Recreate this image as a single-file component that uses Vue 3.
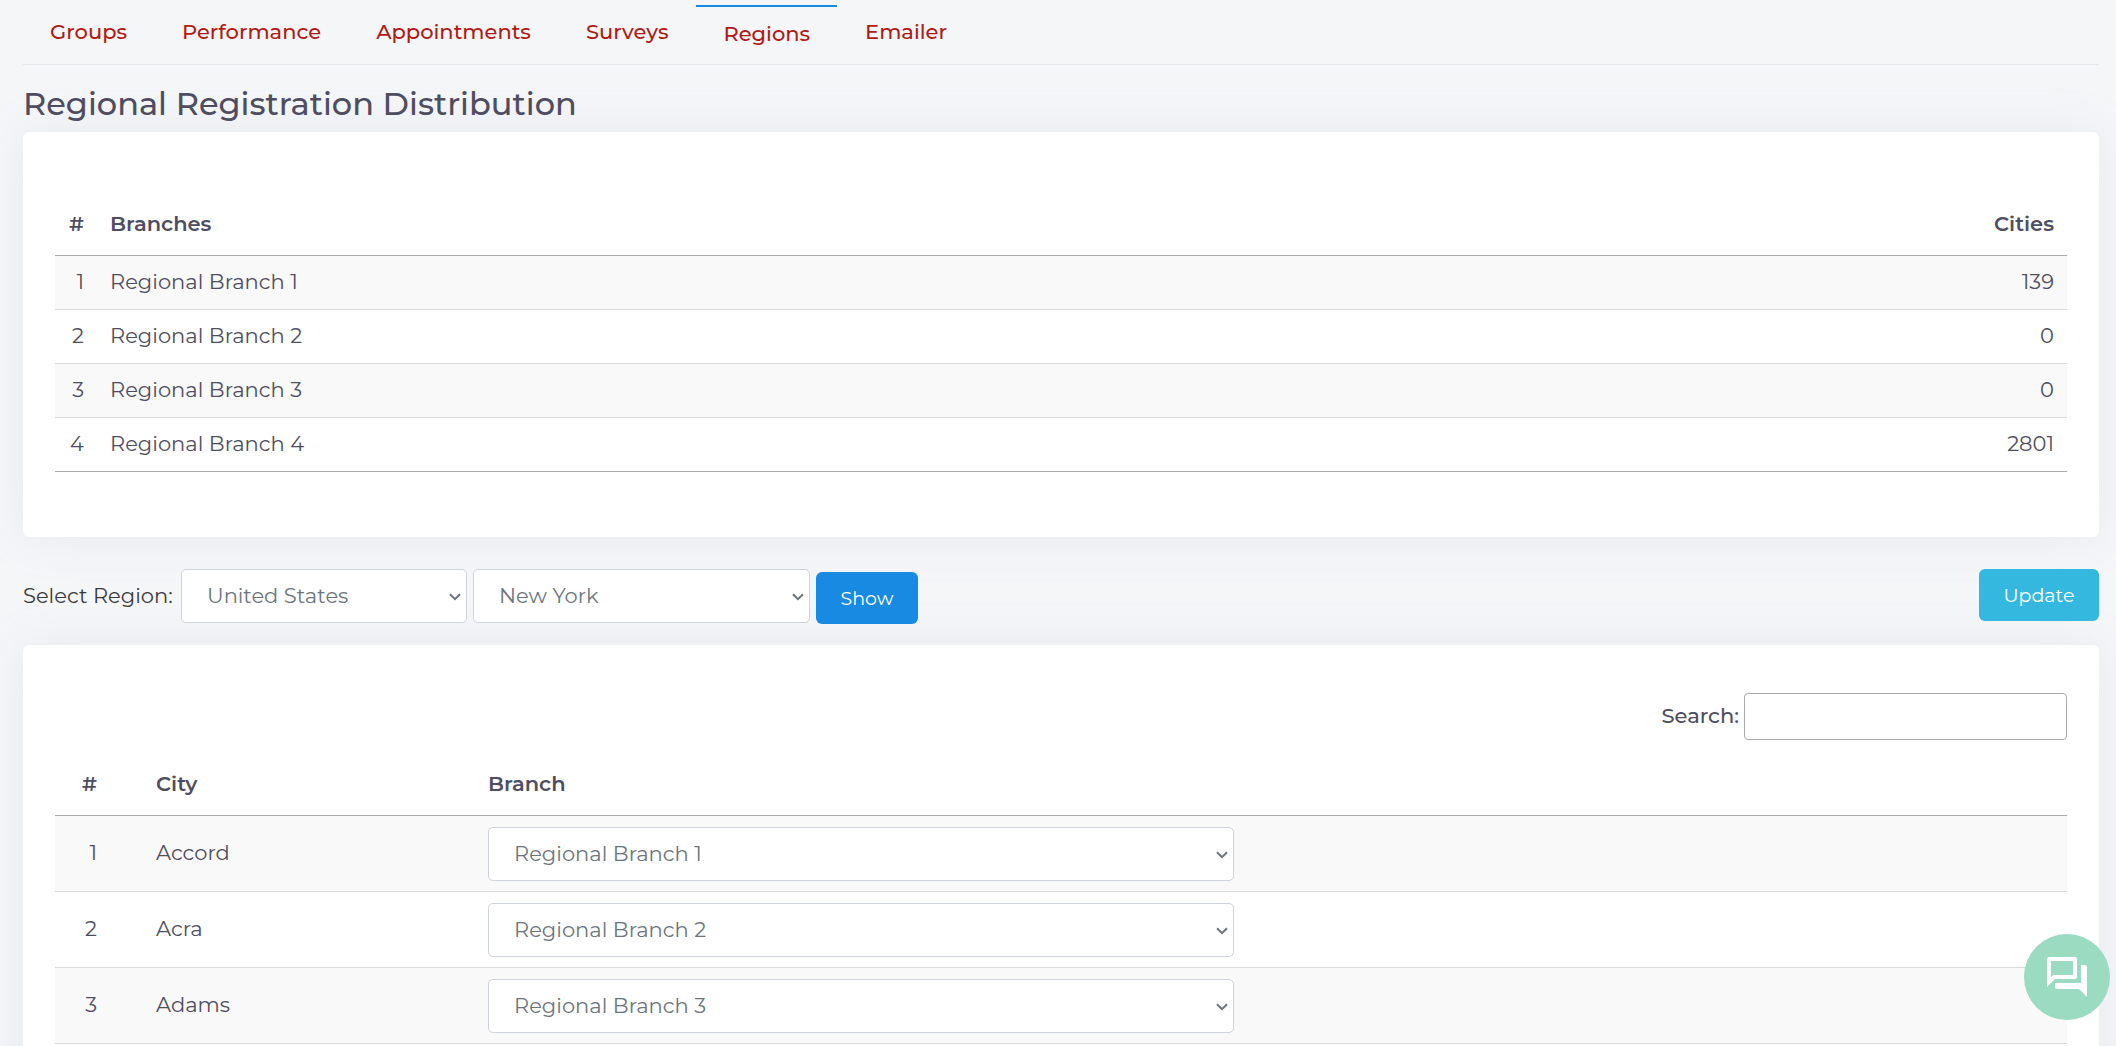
<script setup>
import { ref } from 'vue'

const tabs = ['Groups', 'Performance', 'Appointments', 'Surveys', 'Regions', 'Emailer']
const activeTab = ref('Regions')

const branches = [
  { id: 1, name: 'Regional Branch 1', cities: 139 },
  { id: 2, name: 'Regional Branch 2', cities: 0 },
  { id: 3, name: 'Regional Branch 3', cities: 0 },
  { id: 4, name: 'Regional Branch 4', cities: 2801 }
]

const country = ref('United States')
const state = ref('New York')
const search = ref('')

const cities = ref([
  { id: 1, name: 'Accord', branch: 'Regional Branch 1' },
  { id: 2, name: 'Acra', branch: 'Regional Branch 2' },
  { id: 3, name: 'Adams', branch: 'Regional Branch 3' }
])
</script>

<template>
  <main class="page">
    <nav class="tabs">
      <a
        v-for="tab in tabs"
        :key="tab"
        href="#"
        class="tab"
        :class="{ active: tab === activeTab }"
        @click.prevent="activeTab = tab"
      >{{ tab }}</a>
    </nav>

    <h1 class="title">Regional Registration Distribution</h1>

    <section class="card summary">
      <table>
        <thead>
          <tr>
            <th class="num">#</th>
            <th>Branches</th>
            <th class="end">Cities</th>
          </tr>
        </thead>
        <tbody>
          <tr v-for="b in branches" :key="b.id">
            <td class="num">{{ b.id }}</td>
            <td>{{ b.name }}</td>
            <td class="end">{{ b.cities }}</td>
          </tr>
        </tbody>
      </table>
    </section>

    <form class="filters" @submit.prevent>
      <label for="country">Select Region:</label>
      <div class="select country">
        <select id="country" v-model="country">
          <option>United States</option>
        </select>
        <svg viewBox="0 0 12 8" aria-hidden="true"><path d="M1 1.2 6 6.2 11 1.2" /></svg>
      </div>
      <div class="select state">
        <select v-model="state" aria-label="State">
          <option>New York</option>
        </select>
        <svg viewBox="0 0 12 8" aria-hidden="true"><path d="M1 1.2 6 6.2 11 1.2" /></svg>
      </div>
      <button type="submit" class="btn show">Show</button>
      <button type="button" class="btn update">Update</button>
    </form>

    <section class="card cities">
      <div class="search">
        <label for="search">Search:</label>
        <input id="search" v-model="search" type="search" />
      </div>
      <table>
        <thead>
          <tr>
            <th class="num">#</th>
            <th class="city">City</th>
            <th>Branch</th>
          </tr>
        </thead>
        <tbody>
          <tr v-for="c in cities" :key="c.id">
            <td class="num">{{ c.id }}</td>
            <td class="city">{{ c.name }}</td>
            <td class="choice">
              <div class="select branch">
                <select v-model="c.branch" :aria-label="'Branch for ' + c.name">
                  <option v-for="b in branches" :key="b.id">{{ b.name }}</option>
                </select>
                <svg viewBox="0 0 12 8" aria-hidden="true"><path d="M1 1.2 6 6.2 11 1.2" /></svg>
              </div>
            </td>
          </tr>
        </tbody>
      </table>
    </section>

    <button type="button" class="chat" aria-label="Open chat">
      <svg viewBox="0 0 24 24" aria-hidden="true">
        <path d="M15 4v7H5.17L4 12.17V4h11m1-2H3c-.55 0-1 .45-1 1v14l4-4h10c.55 0 1-.45 1-1V3c0-.55-.45-1-1-1zm5 4h-2v9H6v2c0 .55.45 1 1 1h11l4 4V7c0-.55-.45-1-1-1z" />
      </svg>
    </button>
  </main>
</template>

<style>
html {
  height: 100%;
  overflow: hidden;
}

body {
  height: 100%;
  margin: 0;
  overflow: hidden;
  background: #f5f6f8;
}
</style>

<style scoped>
.page {
  padding: 5px 17px 0 23px;
  font-family: Montserrat, Inter, sans-serif;
  font-size: 21px;
  line-height: 28px;
  color: #4f4d60;
}

.page * {
  box-sizing: border-box;
}

.tabs {
  display: flex;
  gap: 1px;
  height: 60px;
  border-bottom: 1px solid #e5e8eb;
}

.tab {
  padding: 13px 27px 0;
  font-weight: 500;
  color: #b01a16;
  text-decoration: none;
}

.tab.active {
  border-top: 2px solid #188ae2;
}

.title {
  margin: 0;
  padding: 19px 0 8px;
  font-size: 32px;
  line-height: 40px;
  font-weight: 500;
}

.card {
  padding: 48px 32px 65px;
  border-radius: 6px;
  background: #fff;
  box-shadow: 0 0 47px rgba(154, 161, 191, 0.15);
}

table {
  width: 100%;
  border-collapse: separate;
  border-spacing: 0;
}

th,
td {
  padding: 0 13px 1px;
  text-align: left;
}

th {
  height: 76px;
  padding-top: 14px;
  font-weight: 600;
  border-bottom: 1px solid #aaa;
}

td {
  height: 54px;
  border-bottom: 1px solid #d8dadc;
}

tbody tr:nth-child(odd) {
  background: #f9f9f9;
}

.num {
  text-align: right;
}

.end {
  text-align: right;
}

.summary .num {
  width: 42px;
  padding-left: 0;
}

.summary tr:last-child td {
  border-bottom-color: #aaa;
}

.filters {
  display: flex;
  align-items: flex-start;
  gap: 6px;
  height: 55px;
  margin: 32px 0 21px;
  color: #3a3a3a;
}

.filters label {
  width: 152px;
  line-height: 54px;
}

.select {
  position: relative;
}

.select select {
  display: block;
  width: 100%;
  height: 54px;
  padding: 0 25px;
  border: 1px solid #ced4da;
  border-radius: 5px;
  appearance: none;
  background: #fff;
  font: inherit;
  color: #6c757d;
}

.select svg {
  position: absolute;
  top: 24px;
  right: 6px;
  width: 12px;
  height: 8px;
  fill: none;
  stroke: #6c757d;
  stroke-width: 2;
  pointer-events: none;
}

.country {
  width: 286px;
}

.state {
  width: 337px;
}

.btn {
  height: 52px;
  padding: 1px 0 0;
  border: 0;
  border-radius: 6px;
  font: inherit;
  font-size: 19px;
  color: #fff;
}

.show {
  align-self: flex-end;
  width: 102px;
  background: #188ae2;
}

.update {
  width: 120px;
  margin-left: auto;
  background: #35b8e0;
}

.search {
  display: flex;
  justify-content: flex-end;
  gap: 5px;
  font-weight: 500;
}

.search label {
  line-height: 46px;
}

.search input {
  width: 323px;
  height: 47px;
  padding: 0 8px;
  border: 1px solid #aaa;
  border-radius: 4px;
  background: transparent;
  font: inherit;
  color: inherit;
}

.cities td {
  height: 76px;
}

.cities .choice {
  padding-bottom: 0;
}

.cities .num {
  width: 88px;
  padding-right: 46px;
}

.cities .city {
  width: 332px;
}

.branch {
  width: 746px;
  max-width: 100%;
}

.chat {
  position: fixed;
  right: 6px;
  bottom: 26px;
  display: grid;
  place-items: center;
  width: 86px;
  height: 86px;
  padding: 0;
  border: 0;
  border-radius: 50%;
  background: #9bdbc2;
}

.chat svg {
  width: 48px;
  height: 48px;
  fill: #fff;
}
</style>
